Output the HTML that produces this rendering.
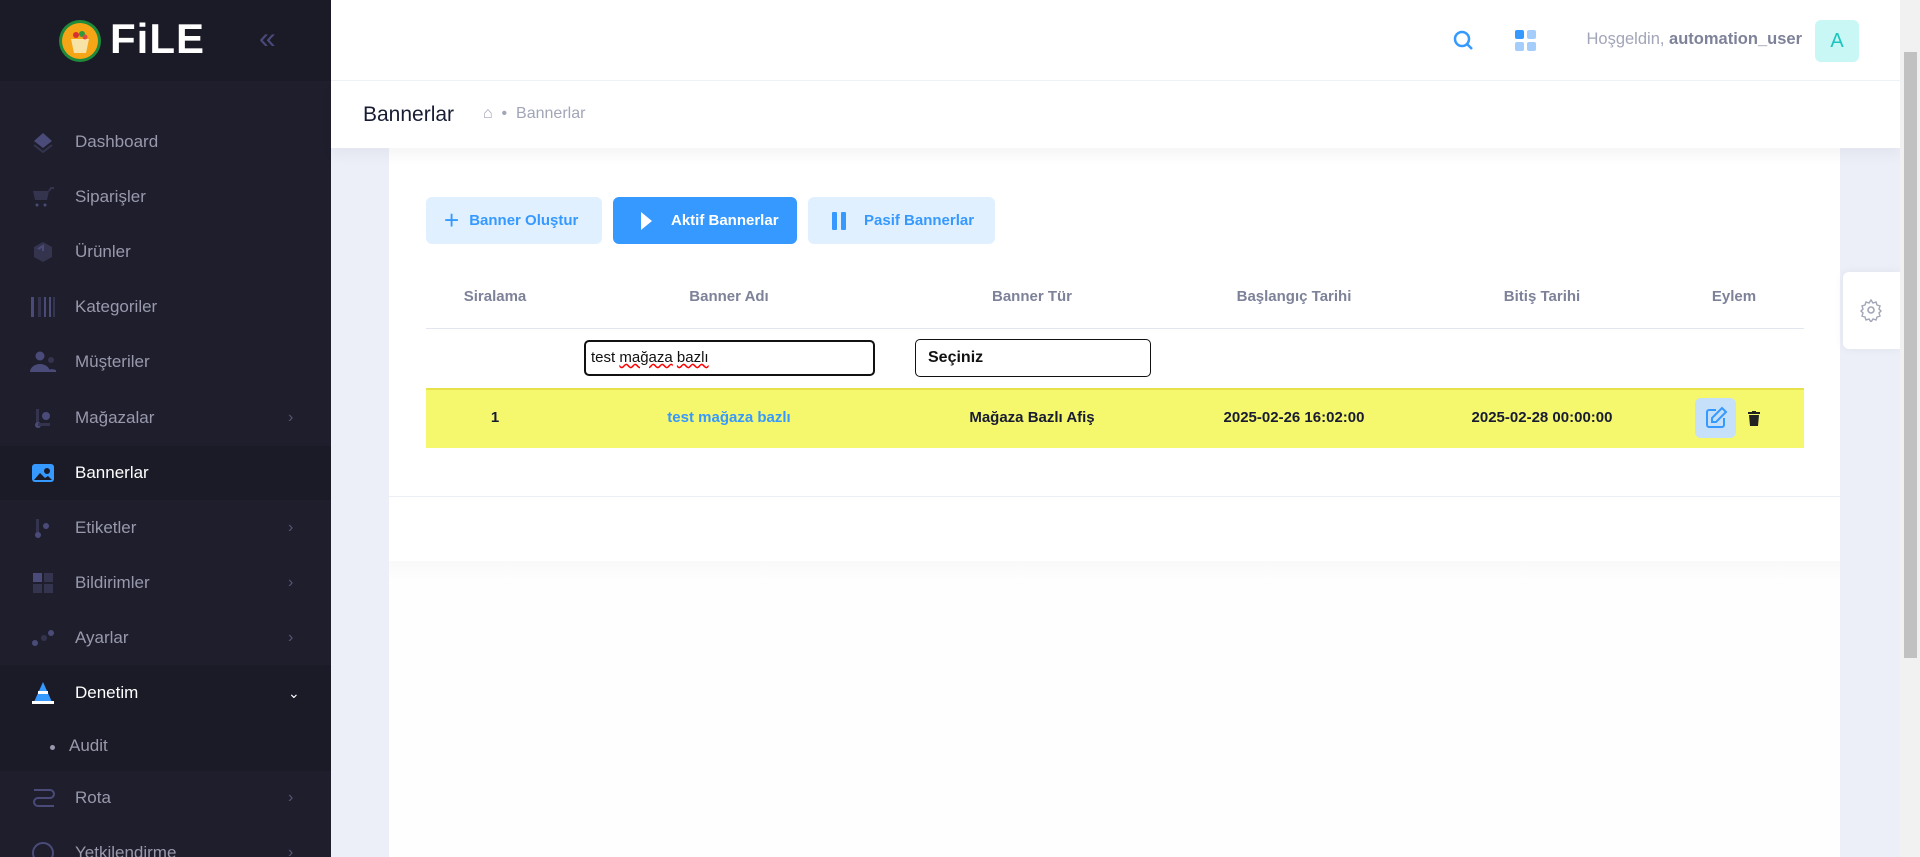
<!DOCTYPE html>
<html><head><meta charset="utf-8">
<style>
*{box-sizing:border-box;margin:0;padding:0}
html,body{width:1920px;height:857px;overflow:hidden}
body{background:#eceff8;font-family:"Liberation Sans",sans-serif;position:relative}
.sb{position:absolute;left:0;top:0;width:331px;height:857px;background:#1e1e2d;overflow:hidden}
.logo{height:81px;background:#1b1b28;position:relative}
.item{position:absolute;left:0;width:331px;height:54px;display:flex;align-items:center;color:#9899ac;font-size:17px}
.item .ic{position:absolute;left:30px;width:26px;height:26px;display:flex;align-items:center;justify-content:center}
.item .t{position:absolute;left:75px}
.item .ch{position:absolute;left:288px;color:#565674;font-size:16px}
.hdr{position:absolute;left:331px;top:0;right:20px;height:81px;background:#fff;border-bottom:1px solid #eff2f5}
.bc{position:absolute;left:331px;top:81px;right:20px;height:67px;background:#fff;box-shadow:0 8px 12px rgba(0,0,0,.04)}
.card{position:absolute;left:389px;top:148px;width:1451px;height:709px;background:#fefefe}
.btn{position:absolute;top:197px;height:47px;border-radius:6px;font-weight:bold;font-size:15px;display:flex;align-items:center}
.th{position:absolute;top:288px;font-size:15px;font-weight:bold;color:#7e8299;transform:translateX(-50%)}
.td{position:absolute;top:409px;font-size:15px;font-weight:bold;color:#181c32;transform:translateX(-50%)}
</style></head><body>
<div class="sb">
 <div class="logo">
  <svg style="position:absolute;left:58px;top:19px" width="44" height="44" viewBox="0 0 44 44"><circle cx="22" cy="22" r="21" fill="#1f8a3a"/><circle cx="22" cy="22" r="18" fill="#f5a515"/><path d="M13 20h18l-3 14h-12z" fill="#f6e3a5"/><circle cx="18" cy="16" r="3" fill="#d83030"/><circle cx="24" cy="15" r="3" fill="#2a9a3a"/><circle cx="27" cy="18" r="2.5" fill="#e04848"/></svg>
  <div style="position:absolute;left:110px;top:15px;color:#fff;font-weight:bold;font-size:42px;letter-spacing:1px">FiLE</div>
  <div style="position:absolute;left:259px;top:22px;color:#4a4a7a;font-size:30px">«</div>
 </div>
 <div class="item" style="top:115px"><span class="ic"><svg width="22" height="22"><path d="M11 2l9 8-9 7-9-7z" fill="#4b4b7a"/><path d="M2 14l9 7 9-7" stroke="#34344f" stroke-width="2" fill="none"/></svg></span><span class="t">Dashboard</span></div>
 <div class="item" style="top:170px"><span class="ic"><svg width="24" height="22"><path d="M2 5h16l-2 9H4z" fill="#34344f"/><path d="M18 5l2-3h3" stroke="#34344f" stroke-width="2" fill="none"/><circle cx="6" cy="19" r="1.5" fill="#4b4b7a"/><circle cx="14" cy="19" r="1.5" fill="#4b4b7a"/></svg></span><span class="t">Siparişler</span></div>
 <div class="item" style="top:225px"><span class="ic"><svg width="22" height="22"><path d="M11 1l9 5v10l-9 5-9-5V6z" fill="#34344f"/><path d="M6 8l5-3v5" stroke="#4b4b7a" stroke-width="2" fill="none"/></svg></span><span class="t">Ürünler</span></div>
 <div class="item" style="top:280px"><span class="ic"><svg width="24" height="20"><rect x="0" y="0" width="3" height="20" fill="#4b4b7a"/><rect x="7" y="0" width="3" height="20" fill="#34344f"/><rect x="13" y="0" width="2" height="20" fill="#4b4b7a"/><rect x="18" y="0" width="2" height="20" fill="#4b4b7a"/><rect x="22" y="0" width="2" height="20" fill="#34344f"/></svg></span><span class="t">Kategoriler</span></div>
 <div class="item" style="top:335px"><span class="ic"><svg width="28" height="22"><circle cx="10" cy="5" r="4.5" fill="#4b4b7a"/><path d="M0 21a10 8 0 0 1 20 0z" fill="#4b4b7a"/><circle cx="21" cy="9" r="3" fill="#34344f"/><path d="M16 21a7 6 0 0 1 12 0z" fill="#4b4b7a"/></svg></span><span class="t">Müşteriler</span></div>
 <div class="item" style="top:391px"><span class="ic"><svg width="22" height="22"><rect x="4" y="2" width="3" height="16" fill="#34344f"/><circle cx="14" cy="9" r="4" fill="#4b4b7a"/><circle cx="6" cy="18" r="3" fill="#4b4b7a"/><rect x="6" y="16" width="12" height="3" fill="#34344f"/></svg></span><span class="t">Mağazalar</span><span class="ch">›</span></div>
 <div class="item" style="top:446px;background:#1b1b28;color:#fff"><span class="ic"><svg width="22" height="18"><rect width="22" height="18" rx="3" fill="#3699ff"/><path d="M2 16l6-7 5 5 3-2 4 4z" fill="#1b1b28"/><circle cx="15" cy="7" r="3" fill="#1b1b28"/></svg></span><span class="t">Bannerlar</span></div>
 <div class="item" style="top:501px"><span class="ic"><svg width="22" height="22"><rect x="4" y="2" width="3" height="16" fill="#34344f"/><circle cx="14" cy="9" r="3" fill="#4b4b7a"/><circle cx="6" cy="18" r="3" fill="#4b4b7a"/></svg></span><span class="t">Etiketler</span><span class="ch">›</span></div>
 <div class="item" style="top:556px"><span class="ic"><svg width="22" height="22"><rect x="1" y="1" width="9" height="9" fill="#4b4b7a"/><rect x="12" y="1" width="9" height="9" fill="#34344f"/><rect x="1" y="12" width="9" height="9" fill="#34344f"/><rect x="12" y="12" width="9" height="9" fill="#34344f"/></svg></span><span class="t">Bildirimler</span><span class="ch">›</span></div>
 <div class="item" style="top:611px"><span class="ic"><svg width="24" height="22"><circle cx="4" cy="16" r="3" fill="#4b4b7a"/><circle cx="13" cy="11" r="3" fill="#34344f"/><circle cx="20" cy="6" r="3" fill="#4b4b7a"/></svg></span><span class="t">Ayarlar</span><span class="ch">›</span></div>
 <div class="item" style="top:665px;height:56px;background:#1b1b28;color:#fff"><span class="ic"><svg width="22" height="24"><path d="M11 1l9 20H2z" fill="#3699ff"/><rect x="0" y="20" width="22" height="3" fill="#fff"/><rect x="6" y="10" width="10" height="3" fill="#fff"/></svg></span><span class="t">Denetim</span><span class="ch" style="color:#fff;font-size:14px">⌄</span></div>
 <div class="item" style="top:721px;height:50px;background:#1b1b28"><span style="position:absolute;left:50px;width:5px;height:5px;border-radius:50%;background:#9899ac;top:24px"></span><span class="t" style="left:69px">Audit</span></div>
 <div class="item" style="top:771px"><span class="ic"><svg width="28" height="24"><path d="M4 4h16a4 4 0 0 1 0 8H8a4 4 0 0 0 0 8h16" stroke="#4b4b7a" stroke-width="2" fill="none"/></svg></span><span class="t">Rota</span><span class="ch">›</span></div>
 <div class="item" style="top:826px"><span class="ic"><svg width="24" height="24"><circle cx="12" cy="12" r="10" stroke="#4b4b7a" stroke-width="2" fill="none"/></svg></span><span class="t">Yetkilendirme</span><span class="ch">›</span></div>
</div>
<div class="card">
 <div style="position:absolute;left:0;right:0;top:0;height:413px;background:#fff"></div>
 <div style="position:absolute;left:0;right:0;top:348px;border-top:1px solid #eceff5"></div>
 <div style="position:absolute;left:0;right:0;top:413px;height:20px;background:linear-gradient(#f9f9fa,#fefefe)"></div>
</div>
<div class="hdr">
 <svg style="position:absolute;left:1121px;top:29px" width="24" height="24" viewBox="0 0 24 24"><circle cx="10" cy="10" r="7" stroke="#3699ff" stroke-width="2.5" fill="none"/><path d="M15 15l5 5" stroke="#3699ff" stroke-width="2.5"/></svg>
 <svg style="position:absolute;left:1183px;top:29px" width="24" height="24"><rect x="1" y="1" width="9" height="9" rx="2" fill="#3699ff"/><rect x="13" y="1" width="9" height="9" rx="2" fill="#a5cdfb"/><rect x="1" y="13" width="9" height="9" rx="2" fill="#a5cdfb"/><rect x="13" y="13" width="9" height="9" rx="2" fill="#a5cdfb"/></svg>
 <div style="position:absolute;right:98px;top:30px;font-size:16.5px;color:#a1a5b7;white-space:nowrap">Hoşgeldin, <b style="color:#7e8299">automation_user</b></div>
 <div style="position:absolute;left:1484px;top:20px;width:44px;height:42px;border-radius:6px;background:#c9f7f5;color:#1bc5bd;font-size:20px;display:flex;align-items:center;justify-content:center">A</div>
</div>
<div class="bc">
 <div style="position:absolute;left:32px;top:22px;font-size:21px;color:#181c32">Bannerlar</div>
 <div style="position:absolute;left:152px;top:24px;font-size:16px;color:#a1a5b7">⌂ &nbsp;•&nbsp; Bannerlar</div>
</div>
<div class="btn" style="left:426px;width:176px;background:#e1f0ff;color:#3699ff"><span style="font-size:26px;font-weight:normal;margin:0 10px 0 18px">+</span>Banner Oluştur</div>
<div class="btn" style="left:613px;width:184px;background:#3699ff;color:#fff"><svg style="margin:0 18px 0 28px" width="12" height="18"><path d="M0 0l11 9-11 9z" fill="#fff"/></svg>Aktif Bannerlar</div>
<div class="btn" style="left:808px;width:187px;background:#e1f0ff;color:#3699ff"><svg style="margin:0 18px 0 24px" width="14" height="18"><rect width="5" height="18" rx="1" fill="#3699ff"/><rect x="9" width="5" height="18" rx="1" fill="#3699ff"/></svg>Pasif Bannerlar</div>
<div class="th" style="left:495px">Siralama</div>
<div class="th" style="left:729px">Banner Adı</div>
<div class="th" style="left:1032px">Banner Tür</div>
<div class="th" style="left:1294px">Başlangıç Tarihi</div>
<div class="th" style="left:1542px">Bitiş Tarihi</div>
<div class="th" style="left:1734px">Eylem</div>
<div style="position:absolute;left:426px;width:1378px;top:328px;border-top:1px solid #e4e6ef"></div>
<div style="position:absolute;left:584px;top:340px;width:291px;height:36px;border:2px solid #111;border-radius:5px;font-size:15px;padding:7px 5px;color:#111;background:#fff">test <span style="text-decoration:underline wavy red">mağaza</span> <span style="text-decoration:underline wavy red">bazlı</span></div>
<div style="position:absolute;left:915px;top:339px;width:236px;height:38px;border:1px solid #111;border-radius:5px;font-size:16px;font-weight:bold;padding:9px 12px;color:#111;background:#fff">Seçiniz</div>
<div style="position:absolute;left:426px;top:388px;width:1378px;height:60px;background:#f5f76d;border-top:2px solid #e8e24a"></div>
<div class="td" style="left:495px">1</div>
<div class="td" style="left:729px;color:#3699ff">test mağaza bazlı</div>
<div class="td" style="left:1032px">Mağaza Bazlı Afiş</div>
<div class="td" style="left:1294px">2025-02-26 16:02:00</div>
<div class="td" style="left:1542px">2025-02-28 00:00:00</div>
<div style="position:absolute;left:1695px;top:398px;width:41px;height:40px;border-radius:6px;background:#c7e0f9;display:flex;align-items:center;justify-content:center"><svg width="24" height="24" viewBox="0 0 24 24"><path d="M12 4H5a2 2 0 0 0-2 2v13a2 2 0 0 0 2 2h13a2 2 0 0 0 2-2v-7" stroke="#3699ff" stroke-width="2" fill="none"/><path d="M18 2l4 4-10 10H8v-4z" stroke="#3699ff" stroke-width="2" fill="none"/></svg></div>
<svg style="position:absolute;left:1748px;top:411px" width="12" height="15"><rect x="0" y="1" width="12" height="2" fill="#222"/><rect x="4" y="0" width="4" height="2" fill="#222"/><path d="M1 4h10l-1 11H2z" fill="#222"/></svg>
<div style="position:absolute;left:1843px;top:272px;width:57px;height:77px;background:#fff;border-radius:6px 0 0 6px;box-shadow:0 0 10px rgba(0,0,0,.06)"><svg style="position:absolute;left:16px;top:26px" width="24" height="24" viewBox="0 0 24 24"><circle cx="12" cy="12" r="3" stroke="#a1a5b7" stroke-width="1.6" fill="none"/><path d="M12 2l2 3 3-1 1 3 3 1-1 3 2 2-2 2 1 3-3 1-1 3-3-1-2 3-2-3-3 1-1-3-3-1 1-3-2-2 2-2-1-3 3-1 1-3 3 1z" stroke="#a1a5b7" stroke-width="1.4" fill="none"/></svg></div>
<div style="position:absolute;left:1900px;top:0;width:20px;height:857px;background:#f1f1f1"><div style="position:absolute;left:4px;top:52px;width:13px;height:606px;background:#c1c1c1"></div></div>
</body></html>
